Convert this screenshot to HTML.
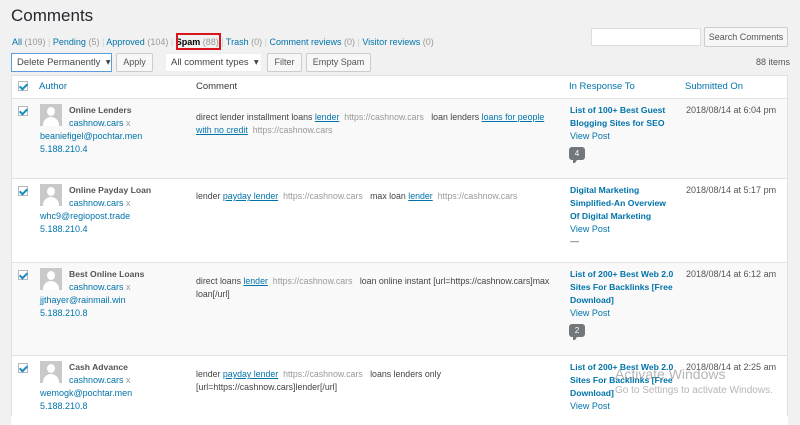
<!DOCTYPE html>
<html><head><meta charset="utf-8"><style>
*{margin:0;padding:0;box-sizing:border-box}
body{width:800px;height:416px;overflow:hidden;background:#f1f1f1;font-family:"Liberation Sans",sans-serif;font-size:9px;color:#444;position:relative}
.a{position:absolute;white-space:nowrap}
a,.l{color:#0073aa;text-decoration:none}
u{color:#0073aa}
.g{color:#999}
.btn{position:absolute;border:1px solid #ccc;background:#f7f7f7;border-radius:2px;color:#555;text-align:center;font-size:9px}
.sel{position:absolute;background:#fff;color:#444;font-size:9.5px;padding-left:5px}
.cb{position:absolute;left:18px;width:10px;height:10px;border:1px solid #b4b9be;background:#fff}
.cb:after{content:"";position:absolute;left:2px;top:0px;width:3px;height:6px;border:solid #1e8cbe;border-width:0 2px 2px 0;transform:rotate(45deg)}
.av{position:absolute;left:40px;width:22px;height:22px;background:#c9c9c9;overflow:hidden}
.av:before{content:"";position:absolute;left:7px;top:3px;width:8px;height:9px;border-radius:50%;background:#fff}
.av:after{content:"";position:absolute;left:3px;top:13px;width:16px;height:12px;border-radius:8px 8px 0 0;background:#fff}
.row{position:absolute;left:11px;width:777px;border-top:1px solid #e1e1e1}
.nm{font-weight:bold;color:#555;font-size:8.6px}
.t{font-weight:bold;color:#0073aa;line-height:13px;font-size:8.6px}
.c{font-size:8.8px}
.bub{position:absolute;left:569px;width:16px;height:13px;background:#72777c;border-radius:3px;color:#fff;font-size:8px;text-align:center;line-height:13px}
.bub:after{content:"";position:absolute;left:4px;bottom:-3px;border:3px solid transparent;border-top-color:#72777c;border-left-color:#72777c;border-width:3px 2px 0 2px}
</style></head><body>
<div class="a" style="left:11px;top:6px;font-size:17px;color:#23282d">Comments</div>
<div class="a" style="left:12px;top:37px;color:#ccc"><a>All</a> <span class="g">(109)</span> | <a>Pending</a> <span class="g">(5)</span> | <a>Approved</a> <span class="g">(104)</span> | <b style="color:#000">Spam</b> <span class="g">(88)</span> | <a>Trash</a> <span class="g">(0)</span> | <a>Comment reviews</a> <span class="g">(0)</span> | <a>Visitor reviews</a> <span class="g">(0)</span></div>
<div class="a" style="left:176px;top:33px;width:45px;height:17px;border:2px solid #d9141c"></div>
<div class="a" style="left:591px;top:28px;width:110px;height:18px;background:#fff;border:1px solid #ddd"></div>
<div class="btn" style="left:704px;top:27px;width:84px;height:20px;line-height:18px">Search Comments</div>
<div class="sel" style="left:11px;top:53px;width:101px;height:19px;line-height:18px;border:1px solid #5b9dd9">Delete Permanently &nbsp;▾</div>
<div class="btn" style="left:116px;top:53px;width:37px;height:19px;line-height:17px">Apply</div>
<div class="sel" style="left:165px;top:53px;width:97px;height:19px;line-height:18px;border:1px solid #eee">All comment types &nbsp;▾</div>
<div class="btn" style="left:267px;top:53px;width:35px;height:19px;line-height:17px">Filter</div>
<div class="btn" style="left:306px;top:53px;width:65px;height:19px;line-height:17px">Empty Spam</div>
<div class="a" style="left:756px;top:57px;color:#555">88 items</div>

<div class="row" style="top:75px;height:24px;background:#fff;border:1px solid #e1e1e1"></div>
<div class="cb" style="top:81px"></div>
<div class="a l" style="left:39px;top:81px;font-size:9.5px">Author</div>
<div class="a" style="left:196px;top:81px;font-size:9.5px;color:#32373c">Comment</div>
<div class="a l" style="left:569px;top:81px;font-size:9.5px">In Response To</div>
<div class="a l" style="left:685px;top:81px;font-size:9.5px">Submitted On</div>

<div class="row" style="top:98px;height:81px;background:#f9f9f9"></div>
<div class="row" style="top:178px;height:84px;background:#fff"></div>
<div class="row" style="top:262px;height:94px;background:#f9f9f9"></div>
<div class="row" style="top:355px;height:70px;background:#fff"></div>
<div class="a" style="left:11px;top:75px;width:1px;height:341px;background:#e1e1e1"></div>
<div class="a" style="left:787px;top:75px;width:1px;height:341px;background:#e1e1e1"></div>

<!-- row1 -->
<div class="cb" style="top:106px"></div><div class="av" style="top:104px"></div>
<div class="a nm" style="left:69px;top:105px">Online Lenders</div>
<div class="a" style="left:69px;top:118px"><a>cashnow.cars</a> <span class="g">x</span></div>
<div class="a l" style="left:40px;top:131px">beaniefigel@pochtar.men</div>
<div class="a l" style="left:40px;top:144px">5.188.210.4</div>
<div class="a c" style="left:196px;top:111px;line-height:13px">direct lender installment loans <u>lender</u> &nbsp;<span class="g">https://cashnow.cars</span> &nbsp; loan lenders <u>loans for people</u><br><u>with no credit</u> &nbsp;<span class="g">https://cashnow.cars</span></div>
<div class="a t" style="left:570px;top:104px">List of 100+ Best Guest<br>Blogging Sites for SEO</div>
<div class="a l" style="left:570px;top:131px">View Post</div>
<div class="bub" style="top:147px">4</div>
<div class="a" style="left:686px;top:105px;color:#555">2018/08/14 at 6:04 pm</div>

<!-- row2 -->
<div class="cb" style="top:186px"></div><div class="av" style="top:184px"></div>
<div class="a nm" style="left:69px;top:185px">Online Payday Loan</div>
<div class="a" style="left:69px;top:198px"><a>cashnow.cars</a> <span class="g">x</span></div>
<div class="a l" style="left:40px;top:211px">whc9@regiopost.trade</div>
<div class="a l" style="left:40px;top:224px">5.188.210.4</div>
<div class="a c" style="left:196px;top:191px">lender <u>payday lender</u> &nbsp;<span class="g">https://cashnow.cars</span> &nbsp; max loan <u>lender</u> &nbsp;<span class="g">https://cashnow.cars</span></div>
<div class="a t" style="left:570px;top:184px">Digital Marketing<br>Simplified-An Overview<br>Of Digital Marketing</div>
<div class="a l" style="left:570px;top:224px">View Post</div>
<div class="a" style="left:570px;top:236px">—</div>
<div class="a" style="left:686px;top:185px;color:#555">2018/08/14 at 5:17 pm</div>

<!-- row3 -->
<div class="cb" style="top:270px"></div><div class="av" style="top:268px"></div>
<div class="a nm" style="left:69px;top:269px">Best Online Loans</div>
<div class="a" style="left:69px;top:282px"><a>cashnow.cars</a> <span class="g">x</span></div>
<div class="a l" style="left:40px;top:295px">jjthayer@rainmail.win</div>
<div class="a l" style="left:40px;top:308px">5.188.210.8</div>
<div class="a c" style="left:196px;top:275px;line-height:13px">direct loans <u>lender</u> &nbsp;<span class="g">https://cashnow.cars</span> &nbsp; loan online instant [url=https://cashnow.cars]max<br>loan[/url]</div>
<div class="a t" style="left:570px;top:268px">List of 200+ Best Web 2.0<br>Sites For Backlinks [Free<br>Download]</div>
<div class="a l" style="left:570px;top:308px">View Post</div>
<div class="bub" style="top:324px">2</div>
<div class="a" style="left:686px;top:269px;color:#555">2018/08/14 at 6:12 am</div>

<!-- row4 -->
<div class="cb" style="top:363px"></div><div class="av" style="top:361px"></div>
<div class="a nm" style="left:69px;top:362px">Cash Advance</div>
<div class="a" style="left:69px;top:375px"><a>cashnow.cars</a> <span class="g">x</span></div>
<div class="a l" style="left:40px;top:388px">wemogk@pochtar.men</div>
<div class="a l" style="left:40px;top:401px">5.188.210.8</div>
<div class="a c" style="left:196px;top:368px;line-height:13px">lender <u>payday lender</u> &nbsp;<span class="g">https://cashnow.cars</span> &nbsp; loans lenders only<br>[url=https://cashnow.cars]lender[/url]</div>
<div class="a t" style="left:570px;top:361px">List of 200+ Best Web 2.0<br>Sites For Backlinks [Free<br>Download]</div>
<div class="a l" style="left:570px;top:401px">View Post</div>
<div class="a" style="left:686px;top:362px;color:#555">2018/08/14 at 2:25 am</div>
<div class="a" style="left:615px;top:366px;font-size:14px;color:rgba(120,120,120,.55)">Activate Windows</div>
<div class="a" style="left:615px;top:385px;font-size:10px;color:rgba(120,120,120,.55)">Go to Settings to activate Windows.</div>
</body></html>
